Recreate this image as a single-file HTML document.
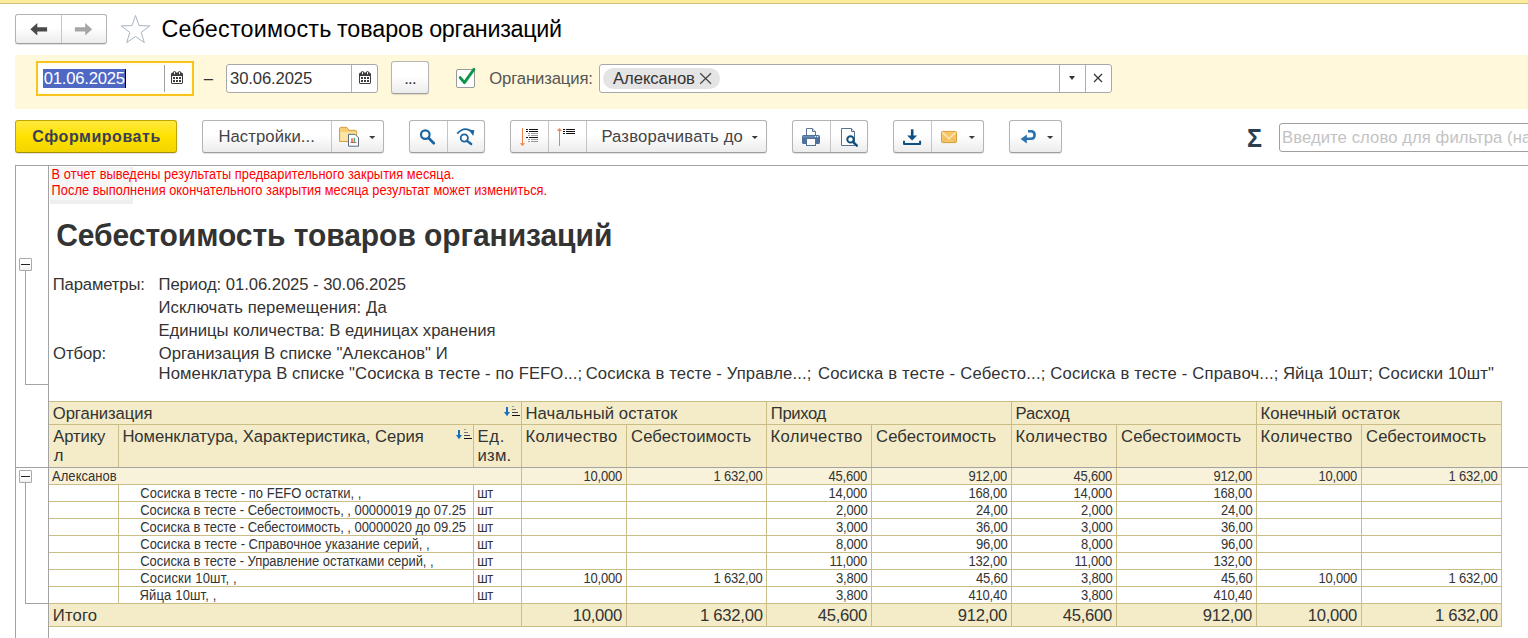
<!DOCTYPE html>
<html lang="ru">
<head>
<meta charset="utf-8">
<title>Себестоимость товаров организаций</title>
<style>
*{box-sizing:border-box;margin:0;padding:0}
html,body{width:1528px;height:638px;overflow:hidden;background:#fff}
body{font-family:"Liberation Sans",Arial,sans-serif;color:#333;position:relative;font-size:16px}
.abs{position:absolute}
.topbar{left:0;top:0;width:1528px;height:4px;background:#fdec9c;border-bottom:1px solid #cdbf7b}
.btn{position:absolute;border:1px solid #b4b4b4;border-bottom-color:#9e9e9e;border-radius:3px;background:linear-gradient(#ffffff 0%,#ffffff 45%,#ececec 100%);box-shadow:0 1px 1px rgba(0,0,0,.12)}
.btn .sep{position:absolute;top:0;bottom:0;width:1px;background:#c4c4c4}
.caret{position:absolute;width:0;height:0;border-style:solid;border-color:#333 transparent transparent transparent;border-width:4px 3.5px 0 3.5px}
.panel{left:15px;top:55px;width:1513px;height:54px;background:#fff8db}
.inp{position:absolute;background:#fff;border:1px solid #a8a8a8;border-radius:3px}
.inp .sep{position:absolute;top:0;bottom:0;width:1px;background:#b0b0b0}
.txt{position:absolute;white-space:pre}
</style>
</head>
<body>
<div class="abs topbar"></div>
<div class="btn" style="left:15px;top:14px;width:92px;height:30px"><div class="sep" style="left:45px"></div></div>
<svg class="abs" style="left:0;top:0" width="160" height="50" viewBox="0 0 160 50">
<path d="M30.4 29.3 L37.3 23 L37.3 27.3 L47.1 27.3 L47.1 31.4 L37.3 31.4 L37.3 35.6 Z" fill="#4a4a4a"/>
<path d="M92.1 29.3 L85.2 23 L85.2 27.3 L74.9 27.3 L74.9 31.4 L85.2 31.4 L85.2 35.6 Z" fill="#a6a6a6"/>
<path d="M135.5 15.5 L139.0 25.6 L149.8 25.9 L141.2 32.4 L144.3 42.6 L135.5 36.5 L126.7 42.6 L129.8 32.4 L121.2 25.9 L132.0 25.6 Z" fill="#fff" stroke="#a9b3bd" stroke-width="1"/>
</svg>
<div class="txt" style="left:161.46px;top:15px;font-size:23.33px;line-height:28px;color:#000;letter-spacing:0.229px;">Себестоимость </div>
<div class="txt" style="left:336.98px;top:15px;font-size:23.33px;line-height:28px;color:#000;letter-spacing:-0.083px;">товаров </div>
<div class="txt" style="left:429.14px;top:15px;font-size:23.33px;line-height:28px;color:#000;letter-spacing:-0.298px;">организаций</div>
<div class="abs panel"></div>
<div class="abs" style="left:36px;top:61px;width:158px;height:35px;border:2px solid #fac41e;background:#fffdf0"></div>
<div class="abs" style="left:40px;top:65px;width:150px;height:27px;background:#fff;border-radius:2px"></div>
<div class="abs" style="left:43px;top:69px;width:83px;height:19px;background:#4f68c4"></div>
<div class="abs" style="left:125px;top:69px;width:1px;height:19px;background:#000"></div>
<div class="abs" style="left:164px;top:65px;width:1px;height:27px;background:#a0a0a0"></div>
<svg class="abs" style="left:171px;top:71px" width="12" height="13" viewBox="0 0 12 13"><path d="M0 3.2 Q0 1.6 1.6 1.6 L2 1.6 Q2 0 3.5 0 Q5 0 5 1.6 L7 1.6 Q7 0 8.5 0 Q10 0 10 1.6 L10.4 1.6 Q12 1.6 12 3.2 L12 11.6 Q12 13 10.6 13 L1.4 13 Q0 13 0 11.6 Z" fill="#3d3d3d"/><rect x="1" y="5" width="10" height="7" rx="0.5" fill="#fff"/><rect x="3" y="0.8" width="1" height="2.4" rx="0.5" fill="#fff"/><rect x="8" y="0.8" width="1" height="2.4" rx="0.5" fill="#fff"/><g fill="#3d3d3d"><rect x="2" y="6" width="2" height="2"/><rect x="5" y="6" width="2" height="2"/><rect x="8" y="6" width="2" height="2"/><rect x="2" y="9" width="2" height="2"/><rect x="5" y="9" width="2" height="2"/><rect x="8" y="9" width="2" height="2"/></g></svg>
<div class="txt" id="d1" style="left:43.66px;top:68px;font-size:16.67px;line-height:21px;color:#fff;letter-spacing:-0.218px;">01.06.2025</div>
<div class="txt" style="left:203.74px;top:68px;font-size:16.67px;line-height:21px;color:#333;">–</div>
<div class="inp" style="left:226px;top:64px;width:152px;height:29px">
  <div class="sep" style="left:124px"></div>
  <svg class="abs" style="left:132px;top:6px" width="12" height="13" viewBox="0 0 12 13"><path d="M0 3.2 Q0 1.6 1.6 1.6 L2 1.6 Q2 0 3.5 0 Q5 0 5 1.6 L7 1.6 Q7 0 8.5 0 Q10 0 10 1.6 L10.4 1.6 Q12 1.6 12 3.2 L12 11.6 Q12 13 10.6 13 L1.4 13 Q0 13 0 11.6 Z" fill="#3d3d3d"/><rect x="1" y="5" width="10" height="7" rx="0.5" fill="#fff"/><rect x="3" y="0.8" width="1" height="2.4" rx="0.5" fill="#fff"/><rect x="8" y="0.8" width="1" height="2.4" rx="0.5" fill="#fff"/><g fill="#3d3d3d"><rect x="2" y="6" width="2" height="2"/><rect x="5" y="6" width="2" height="2"/><rect x="8" y="6" width="2" height="2"/><rect x="2" y="9" width="2" height="2"/><rect x="5" y="9" width="2" height="2"/><rect x="8" y="9" width="2" height="2"/></g></svg>
</div>
<div class="txt" id="d2" style="left:230.08px;top:68px;font-size:16.67px;line-height:21px;color:#333;letter-spacing:-0.131px;">30.06.2025</div>
<div class="btn" style="left:391px;top:61px;width:38px;height:33px"></div>
<div class="txt" id="dots" style="left:404.13px;top:68px;font-size:16.67px;line-height:21px;color:#333;letter-spacing:-0.728px;">...</div>
<div class="abs" style="left:456px;top:69px;width:19px;height:19px;background:#fff;border:1px solid #9a9a9a;border-radius:2px"></div>
<svg class="abs" style="left:456px;top:66px" width="22" height="22" viewBox="0 0 22 22"><path d="M4.2 11.6 L8.4 16.6 L17.9 3.4" fill="none" stroke="#0e9648" stroke-width="2.9" stroke-linecap="round" stroke-linejoin="round"/></svg>
<div class="txt" id="orgl" style="left:489.17px;top:68px;font-size:16.67px;line-height:21px;color:#555;letter-spacing:-0.118px;">Организация:</div>
<div class="inp" style="left:599px;top:64px;width:513px;height:29px">
  <div class="abs" style="left:3px;top:3px;width:117px;height:21px;border-radius:11px;background:#e4e4e4"></div>
  <svg class="abs" style="left:99px;top:7px" width="13" height="13" viewBox="0 0 13 13"><path d="M1.2 1.3 L12 11.8 M12 1.3 L1.2 11.8" stroke="#444" stroke-width="1.2" fill="none"/></svg>
  <div class="sep" style="left:459px"></div>
  <div class="caret" style="left:468.6px;top:11px"></div>
  <div class="sep" style="left:485px"></div>
  <svg class="abs" style="left:493px;top:8px" width="10" height="10" viewBox="0 0 10 10"><path d="M1 1 L9 9 M9 1 L1 9" stroke="#333" stroke-width="1.2" fill="none"/></svg>
</div>
<div class="txt" id="chip" style="left:613.04px;top:68px;font-size:16.67px;line-height:21px;color:#333;letter-spacing:-0.072px;">Алексанов</div>
<div class="abs" style="left:15px;top:120px;width:162px;height:33px;border:1px solid #c2a500;border-bottom-color:#a58e00;border-radius:3px;background:linear-gradient(#ffea3e 0%,#ffe100 50%,#f3d500 100%);box-shadow:0 1px 1px rgba(0,0,0,.12)"></div>
<div class="txt" id="t_form" style="left:32.35px;top:127px;font-size:16px;line-height:19px;color:#3b3f54;font-weight:bold;letter-spacing:0.551px;">Сформировать</div>
<div class="btn" style="left:202px;top:120px;width:182px;height:33px"><div class="sep" style="left:128px"></div></div>
<div class="btn" style="left:409px;top:120px;width:76px;height:33px"><div class="sep" style="left:37px"></div></div>
<div class="btn" style="left:510px;top:120px;width:257px;height:33px"><div class="sep" style="left:37px"></div><div class="sep" style="left:75px"></div></div>
<div class="btn" style="left:792px;top:120px;width:76px;height:33px"><div class="sep" style="left:37px"></div></div>
<div class="btn" style="left:893px;top:120px;width:91px;height:33px"><div class="sep" style="left:37px"></div></div>
<div class="btn" style="left:1009px;top:120px;width:53px;height:33px"></div>
<div class="txt" id="t_nastr" style="left:218.40px;top:126px;font-size:16.67px;line-height:21px;color:#444;letter-spacing:0.084px;">Настройки...</div>
<div class="txt" id="t_razv" style="left:601.40px;top:126px;font-size:16.67px;line-height:21px;color:#444;letter-spacing:0.176px;">Разворачивать до</div>
<svg class="abs" style="left:0;top:110px" width="1528" height="50" viewBox="0 110 1528 50"><path d="M339.5 141.5 L339.5 129 Q339.5 127.3 341.2 127.3 L346 127.3 Q347 127.3 347.6 128.2 L349 130.3 L355.3 130.3 Q356.6 130.3 356.6 131.6 L356.6 141.5 Z" fill="#f6cf74" stroke="#d1a043" stroke-width="1"/><path d="M340.3 132 L356 132 L356 141 L340.3 141 Z" fill="#fbe4a4"/><path d="M348.5 134.3 L355 134.3 L358.5 137.8 L358.5 146.2 L348.5 146.2 Z" fill="#fff" stroke="#5a6b80" stroke-width="1"/><path d="M350.5 142.5 L356.5 142.5" stroke="#c86060" stroke-width="1"/><path d="M352 138.3 L352 142.5" stroke="#e02020" stroke-width="1.1"/><path d="M354.2 137.8 L354.2 142.5" stroke="#22a040" stroke-width="1.1"/><path d="M369.09999999999997 136 L375.3 136 L372.2 139.1 Z" fill="#3a3a3a"/><circle cx="425.3" cy="134.6" r="4.3" fill="none" stroke="#1b64a0" stroke-width="2.2"/><path d="M428.6 138 L433.8 143.2" stroke="#1b64a0" stroke-width="2.7" stroke-linecap="round"/><circle cx="464.3" cy="138" r="3.6" fill="none" stroke="#1b64a0" stroke-width="1.8"/><path d="M467 140.8 L471.2 144" stroke="#1b64a0" stroke-width="2.3" stroke-linecap="round"/><path d="M457.2 133.6 Q464.5 126 471 131.4" fill="none" stroke="#1b64a0" stroke-width="1.8"/><path d="M468.6 129.6 L474.4 130.2 L473.2 136 Z" fill="#1b64a0"/><g shape-rendering="crispEdges"><rect x="522" y="128" width="1" height="16" fill="#f08246"/><rect x="559" y="130" width="1" height="16" fill="#f08246"/><rect x="526" y="129" width="2" height="1" fill="#111"/><rect x="529" y="129" width="9" height="1" fill="#111"/><rect x="526" y="131" width="2" height="1" fill="#111"/><rect x="529" y="131" width="9" height="1" fill="#111"/><rect x="526" y="137" width="2" height="1" fill="#111"/><rect x="529" y="137" width="9" height="1" fill="#111"/><rect x="528" y="133" width="2" height="1" fill="#9a9a9a"/><rect x="531" y="133" width="7" height="1" fill="#9a9a9a"/><rect x="528" y="135" width="2" height="1" fill="#9a9a9a"/><rect x="531" y="135" width="7" height="1" fill="#9a9a9a"/><rect x="528" y="139" width="2" height="1" fill="#9a9a9a"/><rect x="531" y="139" width="7" height="1" fill="#9a9a9a"/><rect x="528" y="141" width="2" height="1" fill="#9a9a9a"/><rect x="531" y="141" width="7" height="1" fill="#9a9a9a"/><rect x="563" y="129" width="2" height="1" fill="#111"/><rect x="566" y="129" width="9" height="1" fill="#111"/><rect x="563" y="131" width="2" height="1" fill="#111"/><rect x="566" y="131" width="9" height="1" fill="#111"/><rect x="563" y="133" width="2" height="1" fill="#111"/><rect x="566" y="133" width="9" height="1" fill="#111"/></g><path d="M519.9 143.2 L525.1 143.2 L522.5 146 Z" fill="#f08246"/><path d="M556.9 130.9 L562.1 130.9 L559.5 128 Z" fill="#f08246"/><path d="M806.5 135.5 L806.5 128.5 L812.5 128.5 L815.5 131.5 L815.5 135.5 Z" fill="#fff" stroke="#5b7596" stroke-width="1"/><path d="M812.5 128.5 L812.5 131.5 L815.5 131.5" fill="#dfe7f0" stroke="#5b7596" stroke-width="1"/><rect x="802" y="135" width="18" height="9" rx="1.6" fill="#4f709a"/><rect x="803" y="136" width="16" height="1.6" fill="#6c8cb6"/><rect x="806.5" y="138.5" width="9" height="7" fill="#fff" stroke="#4f709a" stroke-width="1"/><rect x="815" y="136" width="1" height="1" fill="#fff"/><rect x="817" y="136" width="1" height="1" fill="#fff"/><path d="M841.5 128.5 L851.5 128.5 L854.5 131.5 L854.5 145.5 L841.5 145.5 Z" fill="#fff" stroke="#5a718f" stroke-width="1"/><path d="M851.5 128.5 L851.5 131.5 L854.5 131.5" fill="#e4eaf2" stroke="#5a718f" stroke-width="1"/><circle cx="850.5" cy="139.4" r="3.2" fill="#fff" stroke="#0b4f7c" stroke-width="2"/><path d="M853.2 142.2 L856.8 145.6" stroke="#0b4f7c" stroke-width="2.5" stroke-linecap="round"/><path d="M912.2 129.3 L912.2 137" stroke="#0f4f82" stroke-width="2.6"/><path d="M907.1 135.6 L917.1 135.6 L912.1 140.6 Z" fill="#0f4f82"/><path d="M904 140.8 L904 143.9 L920.1 143.9 L920.1 140.8" fill="none" stroke="#0f4f82" stroke-width="2" stroke-linejoin="round"/><rect x="941.5" y="131.4" width="15" height="11.2" rx="1" fill="#f6c566" stroke="#d79d38" stroke-width="1"/><path d="M942.3 142 L947.6 136.6 M955.7 142 L950.4 136.6" fill="none" stroke="#e6b354" stroke-width="1"/><path d="M942.2 132.2 L949 138.6 L955.8 132.2" fill="none" stroke="#fdeec8" stroke-width="1.2"/><path d="M968.8 136 L975.0 136 L971.9 139.1 Z" fill="#3a3a3a"/><path d="M751.6999999999999 136 L757.9 136 L754.8 139.1 Z" fill="#3a3a3a"/><path d="M1025 138.8 L1031 138.8 Q1034.6 138.8 1034.6 135 Q1034.6 131.2 1031 131.2 L1028 131.2" fill="none" stroke="#2b73ae" stroke-width="2.6"/><path d="M1020.6 139 L1026.8 134.6 L1026.8 143.4 Z" fill="#2b73ae"/><path d="M1047.0 136 L1053.1999999999998 136 L1050.1 139.1 Z" fill="#3a3a3a"/></svg>
<div class="inp" style="left:1279px;top:123px;width:260px;height:29px;border-color:#a0a0a0"></div>
<div class="txt" id="sigma" style="left:1247.10px;top:123px;font-size:25px;line-height:30px;color:#2b3f51;font-weight:bold;">Σ</div>
<div class="txt" id="t_filter" style="left:1282.00px;top:127px;font-size:16.67px;line-height:21px;color:#c3c3c3;letter-spacing:0.080px;">Введите слово для фильтра (на</div>
<div class="abs" style="left:15px;top:165px;width:1513px;height:1px;background:#a3a3a3"></div>
<div class="abs" style="left:15px;top:165px;width:1px;height:473px;background:#a3a3a3"></div>
<div class="abs" style="left:48px;top:166px;width:1px;height:472px;background:#a3a3a3"></div>
<div class="abs" style="left:50px;top:167px;width:83px;height:37px;background:#eeeeee"></div>
<div class="abs" style="left:50px;top:167px;width:80px;height:33px;background:#f6f6f6"></div>
<div class="abs" style="left:25px;top:270px;width:1px;height:114px;background:#a3a3a3"></div>
<div class="abs" style="left:25px;top:384px;width:23px;height:1px;background:#a3a3a3"></div>
<div class="abs" style="left:19px;top:258px;width:13px;height:13px;border:1px solid #a9a9a9;border-radius:1px;background:linear-gradient(#fff 50%,#f0f0f0)"></div>
<div class="abs" style="left:21px;top:264px;width:9px;height:1px;background:#222"></div>
<div class="abs" style="left:25px;top:482px;width:1px;height:121px;background:#a3a3a3"></div>
<div class="abs" style="left:25px;top:603px;width:23px;height:1px;background:#a3a3a3"></div>
<div class="abs" style="left:19px;top:470px;width:13px;height:13px;border:1px solid #a9a9a9;border-radius:1px;background:linear-gradient(#fff 50%,#f0f0f0)"></div>
<div class="abs" style="left:21px;top:476px;width:9px;height:1px;background:#222"></div>
<div class="txt" id="r1" style="left:51.62px;top:166px;font-size:12.8px;line-height:17px;color:#ff0000;letter-spacing:0.058px;transform:scaleY(1.09);transform-origin:0 13px;">В отчет выведены результаты предварительного закрытия месяца.</div>
<div class="txt" id="r2" style="left:51.62px;top:182px;font-size:12.8px;line-height:17px;color:#ff0000;letter-spacing:0.036px;transform:scaleY(1.09);transform-origin:0 13px;">После выполнения окончательного закрытия месяца результат может измениться.</div>
<div class="txt" id="bt" style="left:56.24px;top:218px;font-size:30px;line-height:35px;color:#333;font-weight:bold;letter-spacing:-0.063px;transform:scaleY(1.06);transform-origin:0 28px;">Себестоимость товаров организаций</div>
<div class="txt" id="p0" style="left:52.81px;top:274px;font-size:16.67px;line-height:21px;color:#333;letter-spacing:-0.148px;">Параметры:</div>
<div class="txt" id="p1" style="left:158.51px;top:274px;font-size:16.67px;line-height:21px;color:#333;letter-spacing:-0.057px;">Период: 01.06.2025 - 30.06.2025</div>
<div class="txt" id="p2" style="left:158.50px;top:297px;font-size:16.67px;line-height:21px;color:#333;letter-spacing:0.101px;">Исключать перемещения: Да</div>
<div class="txt" id="p3" style="left:158.50px;top:320px;font-size:16.67px;line-height:21px;color:#333;letter-spacing:-0.027px;">Единицы количества: В единицах хранения</div>
<div class="txt" id="p4" style="left:52.97px;top:343px;font-size:16.67px;line-height:21px;color:#333;">Отбор:</div>
<div class="txt" id="p5" style="left:158.67px;top:343px;font-size:16.67px;line-height:21px;color:#333;letter-spacing:0.027px;">Организация В списке "Алексанов" И</div>
<div class="txt" style="left:158.60px;top:363px;font-size:16.67px;line-height:21px;color:#333;letter-spacing:0.089px;">Номенклатура В списке "Сосиска в тесте - по FEFO...; </div>
<div class="txt" style="left:585.66px;top:363px;font-size:16.67px;line-height:21px;color:#333;letter-spacing:0.125px;">Сосиска в тесте - Управле...; </div>
<div class="txt" style="left:817.96px;top:363px;font-size:16.67px;line-height:21px;color:#333;letter-spacing:0.189px;">Сосиска в тесте - Себесто...; </div>
<div class="txt" style="left:1050.26px;top:363px;font-size:16.67px;line-height:21px;color:#333;letter-spacing:0.178px;">Сосиска в тесте - Справоч...; </div>
<div class="txt" style="left:1282.89px;top:363px;font-size:16.67px;line-height:21px;color:#333;letter-spacing:0.109px;">Яйца 10шт; </div>
<div class="txt" style="left:1378.36px;top:363px;font-size:16.67px;line-height:21px;color:#333;letter-spacing:0.140px;">Сосиски 10шт"</div>
<div class="abs" style="left:49px;top:401px;width:1453px;height:67px;background:#f4ecc8"></div>
<div class="abs" style="left:49px;top:468px;width:1453px;height:17px;background:#f9f2db"></div>
<div class="abs" style="left:49px;top:603px;width:1453px;height:24px;background:#f4ecc8"></div>
<div class="abs" style="left:49px;top:401px;width:1453px;height:1px;background:#cabd86"></div>
<div class="abs" style="left:49px;top:424px;width:1453px;height:1px;background:#cabd86"></div>
<div class="abs" style="left:49px;top:484px;width:1453px;height:1px;background:#cabd86"></div>
<div class="abs" style="left:49px;top:501px;width:1453px;height:1px;background:#cabd86"></div>
<div class="abs" style="left:49px;top:518px;width:1453px;height:1px;background:#cabd86"></div>
<div class="abs" style="left:49px;top:535px;width:1453px;height:1px;background:#cabd86"></div>
<div class="abs" style="left:49px;top:552px;width:1453px;height:1px;background:#cabd86"></div>
<div class="abs" style="left:49px;top:569px;width:1453px;height:1px;background:#cabd86"></div>
<div class="abs" style="left:49px;top:586px;width:1453px;height:1px;background:#cabd86"></div>
<div class="abs" style="left:49px;top:603px;width:1453px;height:1px;background:#cabd86"></div>
<div class="abs" style="left:49px;top:626px;width:1453px;height:1px;background:#cabd86"></div>
<div class="abs" style="left:118px;top:424px;width:1px;height:43px;background:#cabd86"></div>
<div class="abs" style="left:118px;top:484px;width:1px;height:119px;background:#cabd86"></div>
<div class="abs" style="left:473px;top:424px;width:1px;height:43px;background:#cabd86"></div>
<div class="abs" style="left:473px;top:484px;width:1px;height:119px;background:#cabd86"></div>
<div class="abs" style="left:521px;top:401px;width:1px;height:226px;background:#cabd86"></div>
<div class="abs" style="left:626px;top:424px;width:1px;height:203px;background:#cabd86"></div>
<div class="abs" style="left:766px;top:401px;width:1px;height:226px;background:#cabd86"></div>
<div class="abs" style="left:871px;top:424px;width:1px;height:203px;background:#cabd86"></div>
<div class="abs" style="left:1011px;top:401px;width:1px;height:226px;background:#cabd86"></div>
<div class="abs" style="left:1116px;top:424px;width:1px;height:203px;background:#cabd86"></div>
<div class="abs" style="left:1256px;top:401px;width:1px;height:226px;background:#cabd86"></div>
<div class="abs" style="left:1361px;top:424px;width:1px;height:203px;background:#cabd86"></div>
<div class="abs" style="left:1501px;top:401px;width:1px;height:226px;background:#cabd86"></div>
<div class="abs" style="left:16px;top:467px;width:1512px;height:1px;background:#a3a3a3"></div>
<div class="txt" id="h0" style="left:52.77px;top:403px;font-size:16.67px;line-height:21px;color:#333;letter-spacing:-0.079px;">Организация</div>
<div class="txt" id="h1" style="left:525.50px;top:403px;font-size:16.67px;line-height:21px;color:#333;letter-spacing:0.096px;">Начальный остаток</div>
<div class="txt" id="h2" style="left:770.81px;top:403px;font-size:16.67px;line-height:21px;color:#333;letter-spacing:-0.390px;">Приход</div>
<div class="txt" id="h3" style="left:1015.60px;top:403px;font-size:16.67px;line-height:21px;color:#333;letter-spacing:-0.174px;">Расход</div>
<div class="txt" id="h4" style="left:1260.40px;top:403px;font-size:16.67px;line-height:21px;color:#333;letter-spacing:0.060px;">Конечный остаток</div>
<div class="txt" id="h5" style="left:53.34px;top:426px;font-size:16.67px;line-height:21px;color:#333;letter-spacing:-0.155px;">Артику</div>
<div class="txt" style="left:53.70px;top:445px;font-size:16.67px;line-height:21px;color:#333;">л</div>
<div class="txt" id="h6" style="left:122.40px;top:426px;font-size:16.67px;line-height:21px;color:#333;letter-spacing:-0.051px;">Номенклатура, Характеристика, Серия</div>
<div class="txt" id="h7" style="left:477.50px;top:426px;font-size:16.67px;line-height:21px;color:#333;letter-spacing:0.737px;">Ед.</div>
<div class="txt" id="h8" style="left:477.58px;top:445px;font-size:16.67px;line-height:21px;color:#333;letter-spacing:0.197px;">изм.</div>
<div class="txt" id="hk0" style="left:525.60px;top:426px;font-size:16.67px;line-height:21px;color:#333;letter-spacing:0.245px;">Количество</div>
<div class="txt" id="hs0" style="left:631.06px;top:426px;font-size:16.67px;line-height:21px;color:#333;letter-spacing:0.055px;">Себестоимость</div>
<div class="txt" id="hk1" style="left:770.60px;top:426px;font-size:16.67px;line-height:21px;color:#333;letter-spacing:0.245px;">Количество</div>
<div class="txt" id="hs1" style="left:876.06px;top:426px;font-size:16.67px;line-height:21px;color:#333;letter-spacing:0.055px;">Себестоимость</div>
<div class="txt" id="hk2" style="left:1015.60px;top:426px;font-size:16.67px;line-height:21px;color:#333;letter-spacing:0.245px;">Количество</div>
<div class="txt" id="hs2" style="left:1121.06px;top:426px;font-size:16.67px;line-height:21px;color:#333;letter-spacing:0.055px;">Себестоимость</div>
<div class="txt" id="hk3" style="left:1260.60px;top:426px;font-size:16.67px;line-height:21px;color:#333;letter-spacing:0.245px;">Количество</div>
<div class="txt" id="hs3" style="left:1366.06px;top:426px;font-size:16.67px;line-height:21px;color:#333;letter-spacing:0.055px;">Себестоимость</div>
<svg class="abs" style="left:504px;top:406px" width="17" height="12" viewBox="0 0 17 12"><path d="M3 1 L3 7" stroke="#1470c0" stroke-width="2"/><path d="M0 6 L3 10.2 L6 6 Z" fill="#1470c0"/><path d="M8 0.5 L10 0.5" stroke="#999" stroke-width="1"/><path d="M8 3.5 L12 3.5" stroke="#777" stroke-width="1"/><path d="M8 6.5 L14 6.5" stroke="#444" stroke-width="1"/><path d="M8 9.5 L16 9.5" stroke="#111" stroke-width="1"/></svg>
<svg class="abs" style="left:456px;top:429px" width="17" height="12" viewBox="0 0 17 12"><path d="M3 1 L3 7" stroke="#1470c0" stroke-width="2"/><path d="M0 6 L3 10.2 L6 6 Z" fill="#1470c0"/><path d="M8 0.5 L10 0.5" stroke="#999" stroke-width="1"/><path d="M8 3.5 L12 3.5" stroke="#777" stroke-width="1"/><path d="M8 6.5 L14 6.5" stroke="#444" stroke-width="1"/><path d="M8 9.5 L16 9.5" stroke="#111" stroke-width="1"/></svg>
<div class="txt" id="g0" style="left:52.04px;top:468px;font-size:13px;line-height:17px;color:#333;letter-spacing:0.037px;transform:scaleY(1.08);transform-origin:0 13px;">Алексанов</div>
<div class="txt" style="left:583.44px;top:468px;font-size:13px;line-height:17px;color:#333;letter-spacing:-0.200px;transform:scaleY(1.08);transform-origin:0 13px;">10,000</div>
<div class="txt" style="left:713.59px;top:468px;font-size:13px;line-height:17px;color:#333;letter-spacing:-0.200px;transform:scaleY(1.08);transform-origin:0 13px;">1 632,00</div>
<div class="txt" style="left:828.44px;top:468px;font-size:13px;line-height:17px;color:#333;letter-spacing:-0.200px;transform:scaleY(1.08);transform-origin:0 13px;">45,600</div>
<div class="txt" style="left:968.44px;top:468px;font-size:13px;line-height:17px;color:#333;letter-spacing:-0.200px;transform:scaleY(1.08);transform-origin:0 13px;">912,00</div>
<div class="txt" style="left:1073.44px;top:468px;font-size:13px;line-height:17px;color:#333;letter-spacing:-0.200px;transform:scaleY(1.08);transform-origin:0 13px;">45,600</div>
<div class="txt" style="left:1213.44px;top:468px;font-size:13px;line-height:17px;color:#333;letter-spacing:-0.200px;transform:scaleY(1.08);transform-origin:0 13px;">912,00</div>
<div class="txt" style="left:1318.44px;top:468px;font-size:13px;line-height:17px;color:#333;letter-spacing:-0.200px;transform:scaleY(1.08);transform-origin:0 13px;">10,000</div>
<div class="txt" style="left:1448.59px;top:468px;font-size:13px;line-height:17px;color:#333;letter-spacing:-0.200px;transform:scaleY(1.08);transform-origin:0 13px;">1 632,00</div>
<div class="txt" id="n0" style="left:140.26px;top:485px;font-size:13px;line-height:17px;color:#333;letter-spacing:0.011px;transform:scaleY(1.08);transform-origin:0 13px;">Сосиска в тесте - по FEFO остатки, ,</div>
<div class="txt" style="left:477.25px;top:485px;font-size:13px;line-height:17px;color:#333;letter-spacing:-0.450px;transform:scaleY(1.08);transform-origin:0 13px;">шт</div>
<div class="txt" style="left:828.44px;top:485px;font-size:13px;line-height:17px;color:#333;letter-spacing:-0.200px;transform:scaleY(1.08);transform-origin:0 13px;">14,000</div>
<div class="txt" style="left:968.44px;top:485px;font-size:13px;line-height:17px;color:#333;letter-spacing:-0.200px;transform:scaleY(1.08);transform-origin:0 13px;">168,00</div>
<div class="txt" style="left:1073.44px;top:485px;font-size:13px;line-height:17px;color:#333;letter-spacing:-0.200px;transform:scaleY(1.08);transform-origin:0 13px;">14,000</div>
<div class="txt" style="left:1213.44px;top:485px;font-size:13px;line-height:17px;color:#333;letter-spacing:-0.200px;transform:scaleY(1.08);transform-origin:0 13px;">168,00</div>
<div class="txt" id="n1" style="left:140.26px;top:502px;font-size:13px;line-height:17px;color:#333;letter-spacing:-0.050px;transform:scaleY(1.08);transform-origin:0 13px;">Сосиска в тесте - Себестоимость, , 00000019 до 07.25</div>
<div class="txt" style="left:477.25px;top:502px;font-size:13px;line-height:17px;color:#333;letter-spacing:-0.450px;transform:scaleY(1.08);transform-origin:0 13px;">шт</div>
<div class="txt" style="left:835.99px;top:502px;font-size:13px;line-height:17px;color:#333;letter-spacing:-0.200px;transform:scaleY(1.08);transform-origin:0 13px;">2,000</div>
<div class="txt" style="left:975.99px;top:502px;font-size:13px;line-height:17px;color:#333;letter-spacing:-0.200px;transform:scaleY(1.08);transform-origin:0 13px;">24,00</div>
<div class="txt" style="left:1080.99px;top:502px;font-size:13px;line-height:17px;color:#333;letter-spacing:-0.200px;transform:scaleY(1.08);transform-origin:0 13px;">2,000</div>
<div class="txt" style="left:1220.99px;top:502px;font-size:13px;line-height:17px;color:#333;letter-spacing:-0.200px;transform:scaleY(1.08);transform-origin:0 13px;">24,00</div>
<div class="txt" id="n2" style="left:140.26px;top:519px;font-size:13px;line-height:17px;color:#333;letter-spacing:-0.050px;transform:scaleY(1.08);transform-origin:0 13px;">Сосиска в тесте - Себестоимость, , 00000020 до 09.25</div>
<div class="txt" style="left:477.25px;top:519px;font-size:13px;line-height:17px;color:#333;letter-spacing:-0.450px;transform:scaleY(1.08);transform-origin:0 13px;">шт</div>
<div class="txt" style="left:835.99px;top:519px;font-size:13px;line-height:17px;color:#333;letter-spacing:-0.200px;transform:scaleY(1.08);transform-origin:0 13px;">3,000</div>
<div class="txt" style="left:975.99px;top:519px;font-size:13px;line-height:17px;color:#333;letter-spacing:-0.200px;transform:scaleY(1.08);transform-origin:0 13px;">36,00</div>
<div class="txt" style="left:1080.99px;top:519px;font-size:13px;line-height:17px;color:#333;letter-spacing:-0.200px;transform:scaleY(1.08);transform-origin:0 13px;">3,000</div>
<div class="txt" style="left:1220.99px;top:519px;font-size:13px;line-height:17px;color:#333;letter-spacing:-0.200px;transform:scaleY(1.08);transform-origin:0 13px;">36,00</div>
<div class="txt" id="n3" style="left:140.26px;top:536px;font-size:13px;line-height:17px;color:#333;transform:scaleY(1.08);transform-origin:0 13px;">Сосиска в тесте - Справочное указание серий, ,</div>
<div class="txt" style="left:477.25px;top:536px;font-size:13px;line-height:17px;color:#333;letter-spacing:-0.450px;transform:scaleY(1.08);transform-origin:0 13px;">шт</div>
<div class="txt" style="left:835.99px;top:536px;font-size:13px;line-height:17px;color:#333;letter-spacing:-0.200px;transform:scaleY(1.08);transform-origin:0 13px;">8,000</div>
<div class="txt" style="left:975.99px;top:536px;font-size:13px;line-height:17px;color:#333;letter-spacing:-0.200px;transform:scaleY(1.08);transform-origin:0 13px;">96,00</div>
<div class="txt" style="left:1080.99px;top:536px;font-size:13px;line-height:17px;color:#333;letter-spacing:-0.200px;transform:scaleY(1.08);transform-origin:0 13px;">8,000</div>
<div class="txt" style="left:1220.99px;top:536px;font-size:13px;line-height:17px;color:#333;letter-spacing:-0.200px;transform:scaleY(1.08);transform-origin:0 13px;">96,00</div>
<div class="txt" id="n4" style="left:140.26px;top:553px;font-size:13px;line-height:17px;color:#333;letter-spacing:-0.058px;transform:scaleY(1.08);transform-origin:0 13px;">Сосиска в тесте - Управление остатками серий, ,</div>
<div class="txt" style="left:477.25px;top:553px;font-size:13px;line-height:17px;color:#333;letter-spacing:-0.450px;transform:scaleY(1.08);transform-origin:0 13px;">шт</div>
<div class="txt" style="left:829.44px;top:553px;font-size:13px;line-height:17px;color:#333;letter-spacing:-0.200px;transform:scaleY(1.08);transform-origin:0 13px;">11,000</div>
<div class="txt" style="left:968.44px;top:553px;font-size:13px;line-height:17px;color:#333;letter-spacing:-0.200px;transform:scaleY(1.08);transform-origin:0 13px;">132,00</div>
<div class="txt" style="left:1074.44px;top:553px;font-size:13px;line-height:17px;color:#333;letter-spacing:-0.200px;transform:scaleY(1.08);transform-origin:0 13px;">11,000</div>
<div class="txt" style="left:1213.44px;top:553px;font-size:13px;line-height:17px;color:#333;letter-spacing:-0.200px;transform:scaleY(1.08);transform-origin:0 13px;">132,00</div>
<div class="txt" id="n5" style="left:140.26px;top:570px;font-size:13px;line-height:17px;color:#333;letter-spacing:0.192px;transform:scaleY(1.08);transform-origin:0 13px;">Сосиски 10шт, ,</div>
<div class="txt" style="left:477.25px;top:570px;font-size:13px;line-height:17px;color:#333;letter-spacing:-0.450px;transform:scaleY(1.08);transform-origin:0 13px;">шт</div>
<div class="txt" style="left:583.44px;top:570px;font-size:13px;line-height:17px;color:#333;letter-spacing:-0.200px;transform:scaleY(1.08);transform-origin:0 13px;">10,000</div>
<div class="txt" style="left:713.59px;top:570px;font-size:13px;line-height:17px;color:#333;letter-spacing:-0.200px;transform:scaleY(1.08);transform-origin:0 13px;">1 632,00</div>
<div class="txt" style="left:835.99px;top:570px;font-size:13px;line-height:17px;color:#333;letter-spacing:-0.200px;transform:scaleY(1.08);transform-origin:0 13px;">3,800</div>
<div class="txt" style="left:975.99px;top:570px;font-size:13px;line-height:17px;color:#333;letter-spacing:-0.200px;transform:scaleY(1.08);transform-origin:0 13px;">45,60</div>
<div class="txt" style="left:1080.99px;top:570px;font-size:13px;line-height:17px;color:#333;letter-spacing:-0.200px;transform:scaleY(1.08);transform-origin:0 13px;">3,800</div>
<div class="txt" style="left:1220.99px;top:570px;font-size:13px;line-height:17px;color:#333;letter-spacing:-0.200px;transform:scaleY(1.08);transform-origin:0 13px;">45,60</div>
<div class="txt" style="left:1318.44px;top:570px;font-size:13px;line-height:17px;color:#333;letter-spacing:-0.200px;transform:scaleY(1.08);transform-origin:0 13px;">10,000</div>
<div class="txt" style="left:1448.59px;top:570px;font-size:13px;line-height:17px;color:#333;letter-spacing:-0.200px;transform:scaleY(1.08);transform-origin:0 13px;">1 632,00</div>
<div class="txt" id="n6" style="left:139.53px;top:587px;font-size:13px;line-height:17px;color:#333;letter-spacing:0.160px;transform:scaleY(1.08);transform-origin:0 13px;">Яйца 10шт, ,</div>
<div class="txt" style="left:477.25px;top:587px;font-size:13px;line-height:17px;color:#333;letter-spacing:-0.450px;transform:scaleY(1.08);transform-origin:0 13px;">шт</div>
<div class="txt" style="left:835.99px;top:587px;font-size:13px;line-height:17px;color:#333;letter-spacing:-0.200px;transform:scaleY(1.08);transform-origin:0 13px;">3,800</div>
<div class="txt" style="left:968.44px;top:587px;font-size:13px;line-height:17px;color:#333;letter-spacing:-0.200px;transform:scaleY(1.08);transform-origin:0 13px;">410,40</div>
<div class="txt" style="left:1080.99px;top:587px;font-size:13px;line-height:17px;color:#333;letter-spacing:-0.200px;transform:scaleY(1.08);transform-origin:0 13px;">3,800</div>
<div class="txt" style="left:1213.44px;top:587px;font-size:13px;line-height:17px;color:#333;letter-spacing:-0.200px;transform:scaleY(1.08);transform-origin:0 13px;">410,40</div>
<div class="txt" id="tot" style="left:52.80px;top:605px;font-size:16.67px;line-height:21px;color:#333;letter-spacing:0.159px;">Итого</div>
<div class="txt" style="left:572.64px;top:605px;font-size:16.67px;line-height:21px;color:#333;letter-spacing:-0.250px;">10,000</div>
<div class="txt" style="left:699.89px;top:605px;font-size:16.67px;line-height:21px;color:#333;letter-spacing:-0.250px;">1 632,00</div>
<div class="txt" style="left:817.64px;top:605px;font-size:16.67px;line-height:21px;color:#333;letter-spacing:-0.250px;">45,600</div>
<div class="txt" style="left:957.64px;top:605px;font-size:16.67px;line-height:21px;color:#333;letter-spacing:-0.250px;">912,00</div>
<div class="txt" style="left:1062.64px;top:605px;font-size:16.67px;line-height:21px;color:#333;letter-spacing:-0.250px;">45,600</div>
<div class="txt" style="left:1202.64px;top:605px;font-size:16.67px;line-height:21px;color:#333;letter-spacing:-0.250px;">912,00</div>
<div class="txt" style="left:1307.64px;top:605px;font-size:16.67px;line-height:21px;color:#333;letter-spacing:-0.250px;">10,000</div>
<div class="txt" style="left:1434.89px;top:605px;font-size:16.67px;line-height:21px;color:#333;letter-spacing:-0.250px;">1 632,00</div>
</body>
</html>
